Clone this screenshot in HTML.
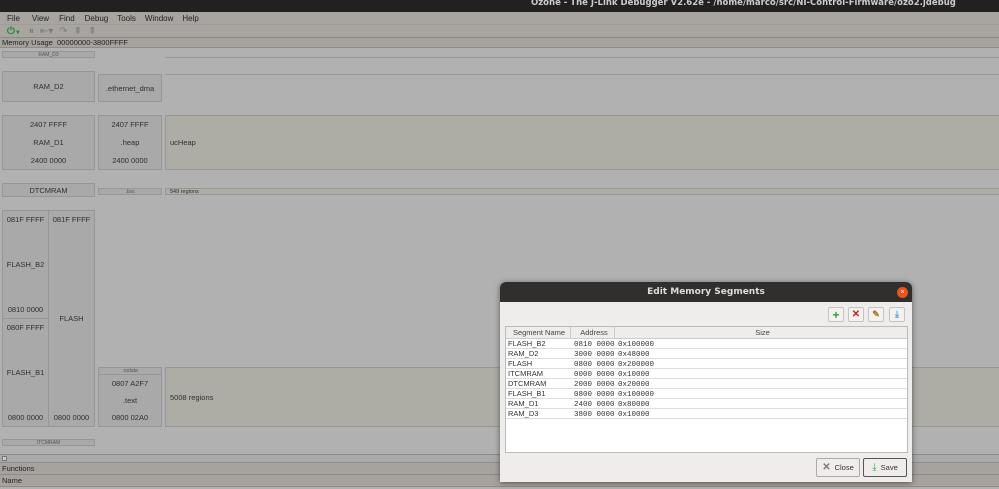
<!DOCTYPE html>
<html><head><meta charset="utf-8"><style>
*{box-sizing:border-box;margin:0;padding:0}
body{width:999px;height:489px;overflow:hidden;background:#b1b1b1;font-family:"Liberation Sans",sans-serif;font-size:7.5px;color:#333;position:relative}
.a{position:absolute}
.box{position:absolute;background:#a9a9a9;border:1px solid #979797;display:flex;align-items:center;justify-content:center;text-align:center;color:#2f2f2f}
.col{flex-direction:column;justify-content:space-between;padding:4px 0}
.rg{background:#adada5;justify-content:flex-start;padding-left:4px}
.sm{font-size:5px;color:#555}
.dlg{position:absolute;left:500px;top:282px;width:412px;height:200px;background:#efedeb;border-radius:6px 6px 0 0;box-shadow:0 1px 6px rgba(0,0,0,.5);overflow:hidden}
.tb{height:20px;background:#302f2d;color:#ddd;font:bold 9px "DejaVu Sans",sans-serif;display:flex;align-items:center;justify-content:center}
.ib{position:absolute;top:25px;width:16px;height:15px;border:1px solid #c5c3bf;border-radius:2px;background:#f3f2f0;display:flex;align-items:center;justify-content:center;font-weight:bold;font-size:12px}
.r{display:flex;height:10px;line-height:10px;border-bottom:1px solid #ddd;white-space:nowrap}
.r div{overflow:hidden}
.c1{width:65px;flex:0 0 65px;padding-left:2px}
.c2{width:44px;flex:0 0 44px;padding-left:3px}
.c3{flex:1;padding-left:3px}
.m{font-family:"Liberation Mono",monospace;font-size:7.5px;position:relative;top:1px}
.btn{position:absolute;top:176px;height:19px;border:1px solid #aaa;border-radius:2px;background:#eeedeb;font-size:7.5px;display:flex;align-items:center;justify-content:center;gap:4px}
</style></head><body>
<div class="a" style="left:0;top:0;width:999px;height:12px;background:#222021;color:#ccc;font:bold 8.5px 'DejaVu Sans',sans-serif;padding-left:531px;line-height:6px;overflow:hidden">Ozone - The J-Link Debugger V2.62e - /home/marco/src/NI-Control-Firmware/ozo2.jdebug</div>
<div class="a" style="left:0;top:12px;width:999px;height:12px;background:#a8a5a1;font-size:8px;line-height:13px;color:#222">
<span style="margin-left:7px">File</span><span style="margin-left:12px">View</span><span style="margin-left:10px">Find</span><span style="margin-left:10px">Debug</span><span style="margin-left:9px">Tools</span><span style="margin-left:9px">Window</span><span style="margin-left:9px">Help</span></div>
<div class="a" style="left:0;top:24px;width:999px;height:14px;background:#a8a5a1;border-top:1px solid #9f9c98;border-bottom:1px solid #8c8985;font-size:10px;line-height:13px;color:#7a7a7a">
<span style="margin-left:7px;color:#1a8a2a;font-weight:bold">⏻</span><span style="font-size:6px;color:#1a8a2a">▼</span><span style="margin-left:8px">⏸</span><span style="margin-left:6px">⇤▾</span><span style="margin-left:6px">↷</span><span style="margin-left:6px">⇞</span><span style="margin-left:6px">⇞</span></div>
<div class="a" style="left:0;top:38px;width:999px;height:10px;background:#a6a39f;border-bottom:1px solid #8e8b88;font-size:7.5px;line-height:10px;padding-left:2px;color:#222">Memory Usage&nbsp; 00000000-3800FFFF</div>

<div class="box sm" style="left:2px;top:51px;width:93px;height:7px">RAM_D3</div>
<div class="a" style="left:165px;top:57px;width:834px;height:1px;background:#999"></div>
<div class="a" style="left:165px;top:74px;width:834px;height:1px;background:#999"></div>
<div class="box" style="left:2px;top:71px;width:93px;height:31px">RAM_D2</div>
<div class="box" style="left:98px;top:74px;width:64px;height:28px">.ethernet_dma</div>
<div class="box col" style="left:2px;top:115px;width:93px;height:55px"><span>2407 FFFF</span><span>RAM_D1</span><span>2400 0000</span></div>
<div class="box col" style="left:98px;top:115px;width:64px;height:55px"><span>2407 FFFF</span><span>.heap</span><span>2400 0000</span></div>
<div class="box rg" style="left:165px;top:115px;width:840px;height:55px">ucHeap</div>
<div class="box" style="left:2px;top:183px;width:93px;height:14px">DTCMRAM</div>
<div class="box sm" style="left:98px;top:188px;width:64px;height:7px">.bss</div>
<div class="box rg" style="left:165px;top:188px;width:840px;height:7px;font-size:5.5px">549 regions</div>
<div class="box col" style="left:2px;top:210px;width:47px;height:109px"><span>081F FFFF</span><span>FLASH_B2</span><span>0810 0000</span></div>
<div class="box col" style="left:2px;top:318px;width:47px;height:109px"><span>080F FFFF</span><span>FLASH_B1</span><span>0800 0000</span></div>
<div class="box col" style="left:48px;top:210px;width:47px;height:217px"><span>081F FFFF</span><span>FLASH</span><span>0800 0000</span></div>
<div class="box sm" style="left:98px;top:367px;width:64px;height:8px">.rodata</div>
<div class="box col" style="left:98px;top:374px;width:64px;height:53px"><span>0807 A2F7</span><span>.text</span><span>0800 02A0</span></div>
<div class="box rg" style="left:165px;top:367px;width:840px;height:60px">5008 regions</div>
<div class="box sm" style="left:2px;top:439px;width:93px;height:7px">ITCMRAM</div>
<div class="a" style="left:0;top:454px;width:999px;height:9px;background:#a9a9a9;border-top:1px solid #8c8c8c;border-bottom:1px solid #8c8c8c"><div class="a" style="left:2px;top:1px;width:5px;height:5px;background:#ccc;border:1px solid #777"></div></div>
<div class="a" style="left:0;top:463px;width:999px;height:12px;background:#a6a39f;border-bottom:1px solid #8e8b88;font-size:7.5px;line-height:12px;padding-left:2px;color:#222">Functions</div>
<div class="a" style="left:0;top:475px;width:999px;height:12px;background:#a6a39f;border-bottom:1px solid #8e8b88;font-size:7.5px;line-height:11px;padding-left:2px;color:#222">Name</div>

<div class="dlg">
<div class="tb">Edit Memory Segments</div>
<div class="a" style="left:397px;top:5px;width:11px;height:11px;border-radius:50%;background:#e95420;color:#fff;font-size:7px;line-height:11px;text-align:center">×</div>
<div class="ib" style="left:328px;color:#3a9a3a">+</div>
<div class="ib" style="left:348px;color:#c02020;font-size:10px">✕</div>
<div class="ib" style="left:368px;color:#a8742e;font-size:9px">✎</div>
<div class="ib" style="left:389px;color:#4aa0e0;font-size:9px">⤓</div>
<div class="a" style="left:5px;top:44px;width:403px;height:127px;background:#fff;border:1px solid #bbb">
<div class="r" style="height:12px;line-height:12px;background:#efedeb;color:#444;border-bottom:1px solid #ccc"><div class="c1" style="text-align:center;border-right:1px solid #ccc">Segment Name</div><div class="c2" style="text-align:center;border-right:1px solid #ccc">Address</div><div class="c3" style="text-align:center">Size</div></div>
<div class="r"><div class="c1">FLASH_B2</div><div class="c2 m">0810 0000</div><div class="c3 m">0x100000</div></div>
<div class="r"><div class="c1">RAM_D2</div><div class="c2 m">3000 0000</div><div class="c3 m">0x48000</div></div>
<div class="r"><div class="c1">FLASH</div><div class="c2 m">0800 0000</div><div class="c3 m">0x200000</div></div>
<div class="r"><div class="c1">ITCMRAM</div><div class="c2 m">0000 0000</div><div class="c3 m">0x10000</div></div>
<div class="r"><div class="c1">DTCMRAM</div><div class="c2 m">2000 0000</div><div class="c3 m">0x20000</div></div>
<div class="r"><div class="c1">FLASH_B1</div><div class="c2 m">0800 0000</div><div class="c3 m">0x100000</div></div>
<div class="r"><div class="c1">RAM_D1</div><div class="c2 m">2400 0000</div><div class="c3 m">0x80000</div></div>
<div class="r"><div class="c1">RAM_D3</div><div class="c2 m">3800 0000</div><div class="c3 m">0x10000</div></div>
</div>
<div class="btn" style="left:316px;width:44px"><span style="color:#777;font-size:10px;font-weight:bold">✕</span><span>Close</span></div>
<div class="btn" style="left:363px;width:44px;border-color:#555"><span style="color:#4a4;font-size:10px">⤓</span><span>Save</span></div>
</div>
</body></html>
